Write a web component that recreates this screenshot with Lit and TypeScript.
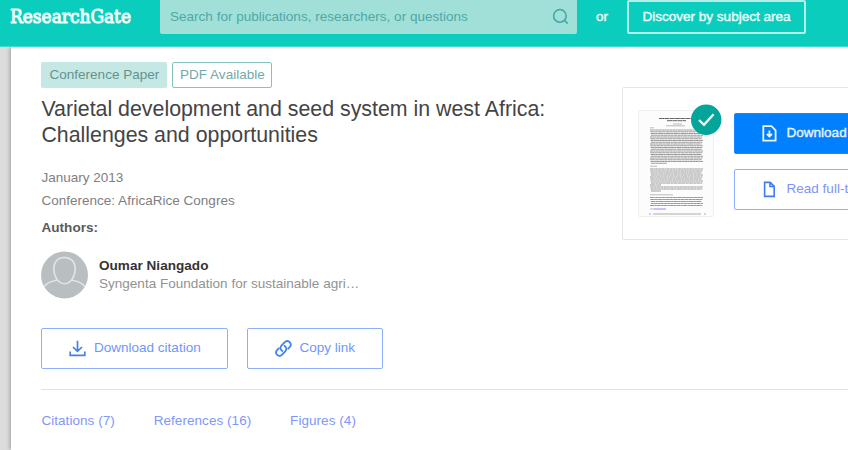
import { LitElement, html, css, svg } from "lit";
import { customElement } from "lit/decorators.js";

const paragraphs = [
  { y: 19, rows: 20, step: 1.75 },
  { y: 58, rows: 12, step: 2 },
  { y: 86.5, rows: 5, step: 2 },
];

@customElement("paper-thumb")
class PaperThumb extends LitElement {
  static styles = css`
    :host { display: block; position: relative; width: 76px; height: 107px; border: 1px solid #efefef; border-radius: 2px; background: #fcfcfc; }
    svg { display: block; }
    .badge { position: absolute; left: 52px; top: -7px; }
  `;
  render() {
    const rows = paragraphs.flatMap((p) =>
      Array.from({ length: p.rows }, (_, i) => {
        const y = p.y + i * p.step;
        const short = i === p.rows - 1 && p.rows > 5 || (p.rows === 12 && i === 8);
        const right = short ? (p.rows === 20 ? 28 : 22) : 64 - ((i * 7) % 3) * 0.7;
        return svg`<line x1=${11 + (i % 4) * 0.3} x2=${right} y1=${y} y2=${y} stroke-dasharray=${`${3 + (i % 3)} .3 ${2 + (i % 2)} .3`}/>`;
      })
    );
    return html`
      <svg width="76" height="107" viewBox="0 0 76 107">
        <g stroke="#999" stroke-width="1.05">${rows}</g>
        <path d="M20 7.5H62M28 9.7H47" stroke="#666" stroke-width="1" stroke-dasharray="5 .3" />
        <path d="M34 13H43M27 14.8H46M11 16.8H15M11 55.2H18M11 83.8H34" stroke="#aaa" stroke-width=".8" />
        <path d="M11 98H15" stroke="#aaa" stroke-width=".8" />
        <path d="M15 98H27" stroke="#8d8df5" stroke-width="1" />
        <path d="M10 103H12M14 103H62M65 103H67" stroke="#a5a5a5" stroke-width=".9" />
      </svg>
      <svg class="badge" width="31" height="31" viewBox="0 0 31 31">
        <circle cx="15.2" cy="15.8" r="15.2" fill="#03a59b" />
        <path d="M8 16L13 20.8L22.6 10.2" fill="none" stroke="#e4f8f6" stroke-width="2.4" />
      </svg>`;
  }
}

@customElement("app-root")
class AppRoot extends LitElement {
  static styles = css`
    :host { display: block; width: 848px; height: 450px; overflow: hidden; position: relative; background: #dcdcdc; font: 13.54px/22px "Liberation Sans", Arial, sans-serif; }
    * { box-sizing: border-box; }
    svg { display: block; flex: none; }
    header { height: 47px; background: #0bcdbd; border-bottom: 1px solid #42d8cb; display: flex; align-items: flex-start; color: #e9fbf9; }
    .logo { margin-left: 10px; width: 150px; }
    .search { width: 417px; height: 34px; background: #a1dfd9; border-radius: 0 0 2px 2px; display: flex; align-items: center; justify-content: space-between; padding: 0 8px 0 10px; color: #4fa9a6; }
    .search svg { margin-top: -1px; }
    .or { margin: 6px 0 0 19px; width: 31px; -webkit-text-stroke: .45px; }
    .discover { height: 34px; width: 179px; border: 2px solid #b5eee8; border-radius: 2px; text-align: center; line-height: 29px; -webkit-text-stroke: .45px; white-space: nowrap; }
    main { margin-left: 11px; height: 403px; background: #fff; box-shadow: -1px 0 4px rgba(0,0,0,.28); padding: 15px 0 0 30.4px; display: flex; clip-path: inset(0 0 0 -11px); }
    .paper { width: 580.6px; flex: none; }
    .tags { display: flex; gap: 5px; }
    .tag { height: 26px; line-height: 26px; text-align: center; border-radius: 2px; white-space: nowrap; }
    .kind { width: 126px; background: #c5e8e4; color: #64938f; }
    .pdf { width: 100px; border: 1px solid #86c3bf; line-height: 24px; color: #74aaa8; }
    h1 { margin: 9px 0 0; font-size: 21.35px; line-height: 25.5px; font-weight: 400; color: #444; white-space: nowrap; }
    .meta { margin-top: 19px; line-height: 22.5px; color: #808080; }
    .authors { margin-top: 5px; font-weight: 700; color: #5a5a5a; letter-spacing: .05px; }
    .author { margin-top: 12px; display: flex; align-items: center; gap: 9.6px; line-height: 18px; color: #929292; }
    .name { font-weight: 700; color: #333; letter-spacing: .03px; }
    .actions { display: flex; gap: 19px; margin-top: 29px; }
    .button { height: 41px; border: 1px solid #8daefc; border-radius: 2px; display: flex; align-items: center; color: #6f97fa; white-space: nowrap; }
    .button span { margin-top: -1px; }
    .cite { width: 187px; padding-left: 27px; gap: 7.5px; }
    .copy { width: 136px; padding-left: 27px; gap: 7px; }
    .tabs { width: 807px; margin-top: 20px; border-top: 1px solid #e0e0e0; padding-top: 20px; display: flex; gap: 38.8px; color: #8296fb; letter-spacing: .04px; }
    .card { margin-top: 25px; width: 260px; flex: none; height: 153px; border: 1px solid #e5e5e5; border-radius: 2px; padding: 22px 0 0 15px; display: flex; align-items: flex-start; gap: 20px; }
    .side { display: flex; flex-direction: column; gap: 15px; padding-top: 3px; }
    .side .button { width: 190px; padding-left: 27px; gap: 9.5px; }
    .side .primary { background: #007fff; border-color: #1888ff; color: #e6f3ff; }
    .side .read { color: #8193fa; }
    .primary span { -webkit-text-stroke: .4px; }
  `;
  render() {
    return html`
      <header>
        <svg class="logo" width="150" height="34" viewBox="0 0 150 34">
          <text x="0" y="23" textLength="121" lengthAdjust="spacingAndGlyphs" font-family="DejaVu Serif, serif" font-size="19.3" fill="#effdfb" stroke="#effdfb" stroke-width="1.1">ResearchGate</text>
        </svg>
        <div class="search">
          <span>Search for publications, researchers, or questions</span>
          <svg width="17" height="17" viewBox="0 0 17 17" fill="none" stroke="#37aaa5" stroke-width="1.5"><circle cx="7.9" cy="7.9" r="6.3" /><path d="M12.3 12.3L15.7 15.6" /></svg>
        </div>
        <span class="or">or</span>
        <div class="discover">Discover by subject area</div>
      </header>
      <main>
        <section class="paper">
          <div class="tags"><span class="tag kind">Conference Paper</span><span class="tag pdf">PDF Available</span></div>
          <h1>Varietal development and seed system in west Africa:<br />Challenges and opportunities</h1>
          <div class="meta">January 2013<br />Conference: AfricaRice Congres</div>
          <div class="authors">Authors:</div>
          <div class="author">
            <svg width="48" height="48" viewBox="0 0 48 48">
              <circle cx="23.5" cy="24" r="23.5" fill="#b9bfc1" />
              <path d="M23.5 6.5C17 6.5 12.8 11 12.8 17.5C12.8 25.5 17.3 32.7 23.5 32.7C29.7 32.7 34.2 25.5 34.2 17.5C34.2 11 30 6.5 23.5 6.5ZM3.2 35.5C6.5 31.5 11 30 16 29.3M43.8 35.5C40.5 31.5 36 30 31 29.3" fill="none" stroke="#e1e5e6" stroke-width="1.5" />
            </svg>
            <div><div class="name">Oumar Niangado</div><div>Syngenta Foundation for sustainable agri…</div></div>
          </div>
          <div class="actions">
            <div class="button cite">
              <svg width="17" height="17" viewBox="0 0 17 17" fill="none" stroke="#4080f0" stroke-width="1.7"><path d="M8.5 .8V11M4 7L8.5 11.3L13 7M1.2 11.5V15.4H15.8V11.5" /></svg>
              <span>Download citation</span>
            </div>
            <div class="button copy">
              <svg width="17" height="17" viewBox="0 0 17 17" fill="none" stroke="#4080f0" stroke-width="1.75" stroke-linecap="round"><path d="M7.2 11C5.2 9.6 5 7.2 6.4 5.7L9.6 2.3C11 .9 13.2.9 14.6 2.2C16 3.6 16 5.7 14.7 7.1L13.2 8.7M9.5 5.8C11.5 7.2 11.8 9.6 10.4 11.1L7.2 14.6C5.8 16 3.6 16.1 2.2 14.8C.8 13.4.9 11.3 2.2 9.9L3.7 8.3" /></svg>
              <span>Copy link</span>
            </div>
          </div>
          <nav class="tabs"><span>Citations (7)</span><span>References (16)</span><span>Figures (4)</span></nav>
        </section>
        <aside class="card">
          <paper-thumb></paper-thumb>
          <div class="side">
            <div class="button primary">
              <svg width="15" height="17" viewBox="0 0 15 17" fill="none" stroke="#edf6ff" stroke-width="1.8"><path d="M1.3 1.2H9.5L13.6 5.3V15.6H1.3ZM7.4 5.5V11.2M4.9 9L7.4 11.5L9.9 9" /></svg>
              <span>Download full-text PDF</span>
            </div>
            <div class="button read">
              <svg width="15" height="17" viewBox="0 0 15 17" fill="none" stroke="#3c7df0" stroke-width="1.6"><path d="M2.6 1.4H8.2L12.2 5.4V15.4H2.6ZM8 1.5V5.5H12" /></svg>
              <span>Read full-text</span>
            </div>
          </div>
        </aside>
      </main>
    `;
  }
}
